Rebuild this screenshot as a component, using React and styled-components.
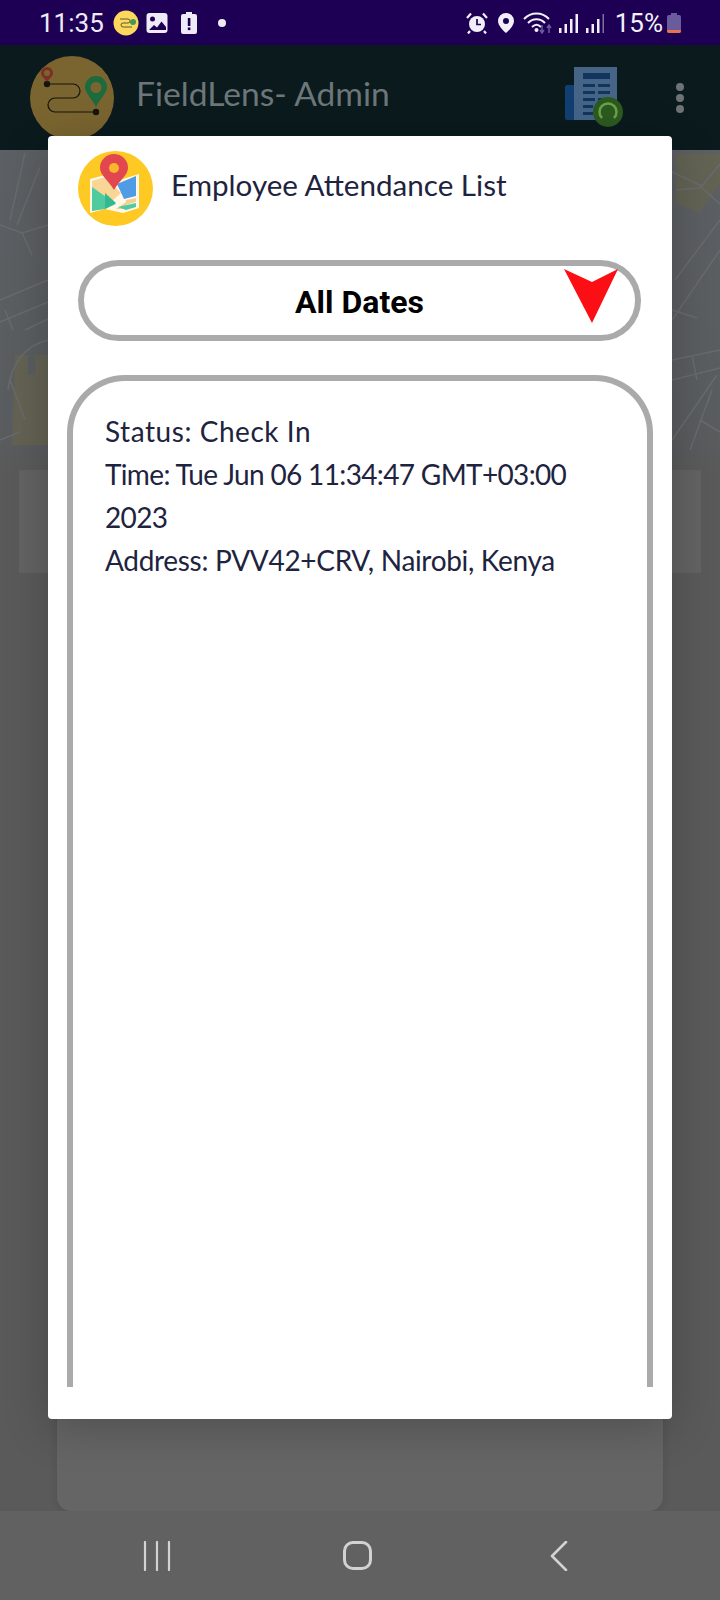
import React from 'react'
import styled, { createGlobalStyle } from 'styled-components'

const ENTRY = [
  { text: 'Status: Check In', tracking: 0.55 },
  { text: 'Time: Tue Jun 06 11:34:47 GMT+03:00 2023', tracking: -0.65 },
  { text: 'Address: PVV42+CRV, Nairobi, Kenya', tracking: -0.32 },
]

export default function App() {
  return (
    <Screen>
      <GlobalStyle />
      <StatusBar>
        <StatusGroup>
          <Clock>11:35</Clock>
          <NotifyLogo viewBox="0 0 26 26">
            <circle cx="13" cy="13" r="12.5" fill="#fdd85d" />
            <path d="M7 9h8a2 2 0 0 1 0 4h-5a2 2 0 0 0 0 4h9" fill="none" stroke="#5a5a3a" strokeWidth="1" />
            <circle cx="20" cy="12" r="3" fill="#3f9a58" />
          </NotifyLogo>
          <GalleryIcon viewBox="0 0 22 22">
            <rect x="0.5" y="1" width="21" height="20" rx="3" fill="#eeeaf6" />
            <circle cx="6.5" cy="7" r="2.5" fill="#1d0054" />
            <path d="M3 18l5-5 3 2.5 4.5-6L20 15v3z" fill="#1d0054" />
          </GalleryIcon>
          <BatteryAlert viewBox="0 0 16 22">
            <path d="M5 0h6v2h3a2 2 0 0 1 2 2v16a2 2 0 0 1-2 2H2a2 2 0 0 1-2-2V4a2 2 0 0 1 2-2h3z" fill="#eeeaf6" />
            <rect x="6.8" y="6" width="2.6" height="8" fill="#1d0054" />
            <rect x="6.8" y="15.5" width="2.6" height="2.6" fill="#1d0054" />
          </BatteryAlert>
          <NotifyDot />
        </StatusGroup>
        <StatusGroup>
          <AlarmIcon viewBox="0 0 22 22">
            <circle cx="11" cy="12" r="8" fill="#f2eff8" />
            <path d="M11 7v5.5h4" fill="none" stroke="#1d0054" strokeWidth="1.7" />
            <path d="M1 6l4-4.5M21 6l-4-4.5M4 19l-2 2.5M18 19l2 2.5" stroke="#f2eff8" strokeWidth="2.2" />
          </AlarmIcon>
          <LocationIcon viewBox="0 0 16 20">
            <path fillRule="evenodd" d="M8 0a8 8 0 0 1 8 8c0 4.5-5 9.5-8 12-3-2.5-8-7.5-8-12a8 8 0 0 1 8-8zm0 5a3 3 0 1 0 0 6 3 3 0 0 0 0-6z" fill="#f2eff8" />
          </LocationIcon>
          <WifiIcon viewBox="0 0 30 22">
            <g fill="none" stroke="#f2eff8" strokeWidth="2">
              <path d="M1 7c7-7.5 18-7.5 25 0" />
              <path d="M5 11c5-5 12-5 17 0" />
              <path d="M9 15c3-3 6-3 9 0" />
            </g>
            <circle cx="13.5" cy="18" r="2" fill="#f2eff8" />
            <path d="M19 13v7m-2-2l2 3 2-3" stroke="#6d5a98" strokeWidth="1.5" fill="none" />
            <path d="M26 21v-7m-2 2l2-3 2 3" stroke="#6d5a98" strokeWidth="1.5" fill="none" />
          </WifiIcon>
          <SignalIcon viewBox="0 0 19 20">
            <rect x="0" y="15" width="2.5" height="5" fill="#f2eff8" />
            <rect x="5.5" y="11" width="2.5" height="9" fill="#f2eff8" />
            <rect x="11" y="6" width="2.5" height="14" fill="#f2eff8" />
            <rect x="16.5" y="1" width="2.5" height="19" fill="#f2eff8" />
          </SignalIcon>
          <SignalIcon viewBox="0 0 19 20" $gap={8}>
            <rect x="0" y="15" width="2.5" height="5" fill="#f2eff8" />
            <rect x="5.5" y="11" width="2.5" height="9" fill="#f2eff8" />
            <rect x="11" y="6" width="2.5" height="14" fill="#f2eff8" />
            <rect x="16.5" y="1" width="1.5" height="19" fill="#7f70a8" />
          </SignalIcon>
          <BatteryLevel>15%</BatteryLevel>
          <BatteryIcon viewBox="0 0 14 20">
            <path d="M4 0h6v2h2a2 2 0 0 1 2 2v14a2 2 0 0 1-2 2H2a2 2 0 0 1-2-2V4a2 2 0 0 1 2-2h2z" fill="#6a5c9c" />
            <path d="M0 17h14v1a2 2 0 0 1-2 2H2a2 2 0 0 1-2-2z" fill="#e8714f" />
          </BatteryIcon>
        </StatusGroup>
      </StatusBar>

      <AppBar>
        <AppLogo viewBox="0 0 84 84">
          <circle cx="42" cy="42" r="42" fill="#7a6530" />
          <path d="M17 28h26a7 7 0 0 1 0 14H25a7 7 0 0 0 0 14h41" fill="none" stroke="#15140e" strokeWidth="1.2" />
          <circle cx="17" cy="28" r="3.2" fill="#15140e" />
          <circle cx="66" cy="56" r="3.2" fill="#15140e" />
          <path fillRule="evenodd" d="M17 11a6 6 0 0 1 6 6c0 3-4 6-6 9-2-3-6-6-6-9a6 6 0 0 1 6-6zm0 3a3 3 0 1 0 0 6 3 3 0 0 0 0-6z" fill="#7d2f24" />
          <path fillRule="evenodd" d="M66 20a11 11 0 0 1 11 11c0 6-7 12-11 20-4-8-11-14-11-20a11 11 0 0 1 11-11zm0 6a5.5 5.5 0 1 0 0 11 5.5 5.5 0 0 0 0-11z" fill="#1d6b3c" />
        </AppLogo>
        <AppTitle>FieldLens- Admin</AppTitle>
        <ReportIcon viewBox="0 0 60 62">
          <rect x="0" y="18" width="16" height="35" rx="2" fill="#123f72" />
          <rect x="9" y="0" width="43" height="53" fill="#456486" />
          <rect x="18" y="6" width="27" height="6" fill="#12355f" />
          <path d="M18 17h12v3H18zM33 17h12v3H33zM18 24h12v3H18zM33 24h12v3H33zM18 31h12v3H18zM33 31h12v3H33zM18 38h10v3H18zM18 45h10v3H18z" fill="#12355f" />
          <circle cx="43" cy="45" r="15" fill="#2b5a20" />
          <path d="M37 51a8.5 8.5 0 1 1 12 0" fill="none" stroke="#6fa045" strokeWidth="2.5" />
        </ReportIcon>
        <MenuDots>
          <MenuDot />
          <MenuDot />
          <MenuDot />
        </MenuDots>
      </AppBar>

      <MapArea>
        <MapDrawing viewBox="0 0 720 300" preserveAspectRatio="none">
          <g fill="#66654f" opacity="0.7">
            <path d="M15 205h13v20h7v-20h13v90H12z" />
            <path d="M676 4h44v30l-20 28-24-8z" />
          </g>
          <g fill="none" stroke="#686b6e" strokeWidth="1.5">
            <path d="M25 3L10 70M40 17L17 75" />
            <path d="M0 75l22 8 26-8M22 83l10 22" />
            <path d="M0 150l48-20M0 172l48-20M5 160l8 20" />
            <path d="M25 180l25-12M8 240c4-30 20-45 40-50M25 270l-15-40" />
            <path d="M0 290l20-8" />
            <path d="M672 22l30 14 18-22M700 36l20 18M676 40l24-2" />
            <path d="M720 70l-45 60M720 100l-48 70M672 160l25 8" />
            <path d="M672 210l48-10M672 230l48-12M692 205l5 25" />
            <path d="M672 290l45-65M690 300l22-60M700 270l20 12" />
          </g>
        </MapDrawing>
        <StatCard />
        <BottomCard />
      </MapArea>

      <NavBar>
        <RecentsIcon viewBox="0 0 28 30">
          <path d="M2 1v28M14 1v28M26 1v28" stroke="#d2d2d2" strokeWidth="2.2" strokeLinecap="round" />
        </RecentsIcon>
        <HomeIcon />
        <BackIcon viewBox="0 0 18 30">
          <path d="M16 1L2 15l14 14" fill="none" stroke="#d2d2d2" strokeWidth="2.6" strokeLinecap="round" strokeLinejoin="round" />
        </BackIcon>
      </NavBar>

      <Dialog>
        <DialogHeader>
          <MapBadge viewBox="0 0 75 75">
            <circle cx="37.5" cy="37.5" r="37.5" fill="#fdc922" />
            <path d="M12 28l15-4 18 4 16-5v34l-16 5-18-4-15 4z" fill="#fff8e8" />
            <path d="M14 30l13-4 16 16-16 14-13 4z" fill="#f9d596" />
            <path d="M14 36l24 17-11 5-13 2z" fill="#4fcba0" />
            <path d="M27 42l11 10-11 6z" fill="#35b88f" />
            <path d="M39 33l19-8v20l-12 3z" fill="#4f9be6" />
            <path d="M48 49l10-2v4l-10 3zM38 58l10-7v7z" fill="#f5cf92" />
            <path d="M40 56l18-4v4l-10 3z" fill="#4fcba0" />
            <path d="M36 3a14 14 0 0 1 14 14c0 7-9 13-14 22-5-9-14-15-14-22a14 14 0 0 1 14-14z" fill="#e2474f" />
            <circle cx="36" cy="17" r="5" fill="#fbb62b" />
          </MapBadge>
          <DialogTitle>Employee Attendance List</DialogTitle>
        </DialogHeader>
        <DateSelect>
          All Dates
          <SelectArrow viewBox="0 0 54 54">
            <path d="M0 0l28 13L54 0 28 54z" fill="#fb0f14" />
          </SelectArrow>
        </DateSelect>
        <EntryList>
          {ENTRY.map((line) => (
            <EntryLine key={line.text} $tracking={line.tracking}>
              {line.text}
            </EntryLine>
          ))}
        </EntryList>
      </Dialog>
    </Screen>
  )
}

const GlobalStyle = createGlobalStyle`
  html, body {
    margin: 0;
    padding: 0;
    background: #5c5c5c;
  }
`

const Screen = styled.div`
  position: relative;
  display: flex;
  flex-direction: column;
  width: 720px;
  height: 1600px;
  overflow: hidden;
  font-family: Roboto, 'Liberation Sans', sans-serif;
`

const StatusBar = styled.header`
  flex: none;
  display: flex;
  justify-content: space-between;
  align-items: center;
  height: 45px;
  padding: 0 39px;
  background: #1d0054;
`

const StatusGroup = styled.div`
  display: flex;
  align-items: center;
`

const Clock = styled.span`
  width: 74px;
  font-size: 26px;
  color: #eeeaf6;
`

const NotifyLogo = styled.svg`
  width: 26px;
  height: 26px;
`

const GalleryIcon = styled.svg`
  width: 22px;
  height: 22px;
  margin-left: 7px;
`

const BatteryAlert = styled.svg`
  width: 16px;
  height: 22px;
  margin-left: 13px;
`

const NotifyDot = styled.span`
  width: 8px;
  height: 8px;
  margin: 0 186px 0 21px;
  border-radius: 50%;
  background: #eeeaf6;
`

const AlarmIcon = styled.svg`
  width: 22px;
  height: 22px;
`

const LocationIcon = styled.svg`
  width: 16px;
  height: 20px;
  margin-left: 10px;
`

const WifiIcon = styled.svg`
  width: 30px;
  height: 22px;
  margin-left: 9px;
`

const SignalIcon = styled.svg`
  width: 19px;
  height: 20px;
  margin-left: ${(p) => p.$gap ?? 6}px;
`

const BatteryLevel = styled.span`
  margin-left: 10px;
  font-size: 26px;
  color: #f2eff8;
`

const BatteryIcon = styled.svg`
  width: 14px;
  height: 20px;
  margin-left: 4px;
`

const AppBar = styled.div`
  flex: none;
  display: flex;
  align-items: center;
  height: 105px;
  padding-left: 30px;
  background: #0a1a1d;
`

const AppLogo = styled.svg`
  flex: none;
  width: 84px;
  height: 84px;
`

const AppTitle = styled.h1`
  width: 428px;
  margin: 0 0 10px 22px;
  font-family: Lato, sans-serif;
  font-size: 33.6px;
  font-weight: 400;
  color: #6d7679;
`

const ReportIcon = styled.svg`
  flex: none;
  width: 60px;
  height: 62px;
  margin-left: 1px;
`

const MenuDots = styled.div`
  display: flex;
  flex-direction: column;
  gap: 3px;
  margin-left: 51px;
`

const MenuDot = styled.span`
  width: 8px;
  height: 8px;
  border-radius: 50%;
  background: #6e7475;
`

const MapArea = styled.main`
  position: relative;
  flex: 1;
  display: flex;
  flex-direction: column;
  background: linear-gradient(#5c5f63 0, #5a5d60 270px, #5a5a5a 320px);
`

const MapDrawing = styled.svg`
  position: absolute;
  top: 0;
  left: 0;
  width: 720px;
  height: 300px;
  filter: blur(0.6px);
`

const StatCard = styled.div`
  position: relative;
  height: 103px;
  margin: 320px 19px 0;
  background: #636363;
`

const BottomCard = styled.div`
  position: relative;
  flex: 1;
  margin: 28px 57px 0;
  border-radius: 0 0 14px 14px;
  background: #656565;
  box-shadow: 0 0 8px rgba(0, 0, 0, 0.12);
`

const NavBar = styled.nav`
  position: relative;
  flex: none;
  display: flex;
  justify-content: space-between;
  align-items: center;
  height: 89px;
  padding: 0 152px 0 143px;
  background: #616161;
`

const RecentsIcon = styled.svg`
  width: 28px;
  height: 30px;
`

const HomeIcon = styled.span`
  box-sizing: border-box;
  width: 29px;
  height: 29px;
  margin-right: 6px;
  border: 3px solid #d2d2d2;
  border-radius: 10px;
`

const BackIcon = styled.svg`
  width: 18px;
  height: 30px;
`

const Dialog = styled.section`
  position: absolute;
  top: 136px;
  left: 48px;
  box-sizing: border-box;
  display: flex;
  flex-direction: column;
  width: 624px;
  height: 1283px;
  padding: 15px 19px 32px;
  border-radius: 4px;
  background: #fff;
  box-shadow: 0 8px 45px rgba(0, 0, 0, 0.22);
`

const DialogHeader = styled.div`
  display: flex;
  align-items: center;
  padding-left: 11px;
`

const MapBadge = styled.svg`
  flex: none;
  width: 75px;
  height: 75px;
`

const DialogTitle = styled.h2`
  margin: 0 0 8px 18px;
  font-family: Lato, sans-serif;
  font-size: 29.6px;
  font-weight: 400;
  color: #1e2340;
`

const DateSelect = styled.div`
  position: relative;
  box-sizing: border-box;
  flex: none;
  height: 81px;
  margin: 34px 12px 34px 11px;
  border: 6px solid #aaa;
  border-radius: 41px;
  font-size: 32px;
  font-weight: 700;
  line-height: 73px;
  text-align: center;
  color: #000;
`

const SelectArrow = styled.svg`
  position: absolute;
  top: 3px;
  right: 17px;
  width: 54px;
  height: 54px;
`

const EntryList = styled.div`
  flex: 1;
  padding: 29px 34px 0 32px;
  border: 6px solid #aaa;
  border-bottom: 0;
  border-radius: 58px 58px 0 0;
`

const EntryLine = styled.p`
  margin: 0;
  font-family: Lato, sans-serif;
  font-size: 28px;
  letter-spacing: ${(p) => p.$tracking}px;
  line-height: 43px;
  color: #1e2340;
`
